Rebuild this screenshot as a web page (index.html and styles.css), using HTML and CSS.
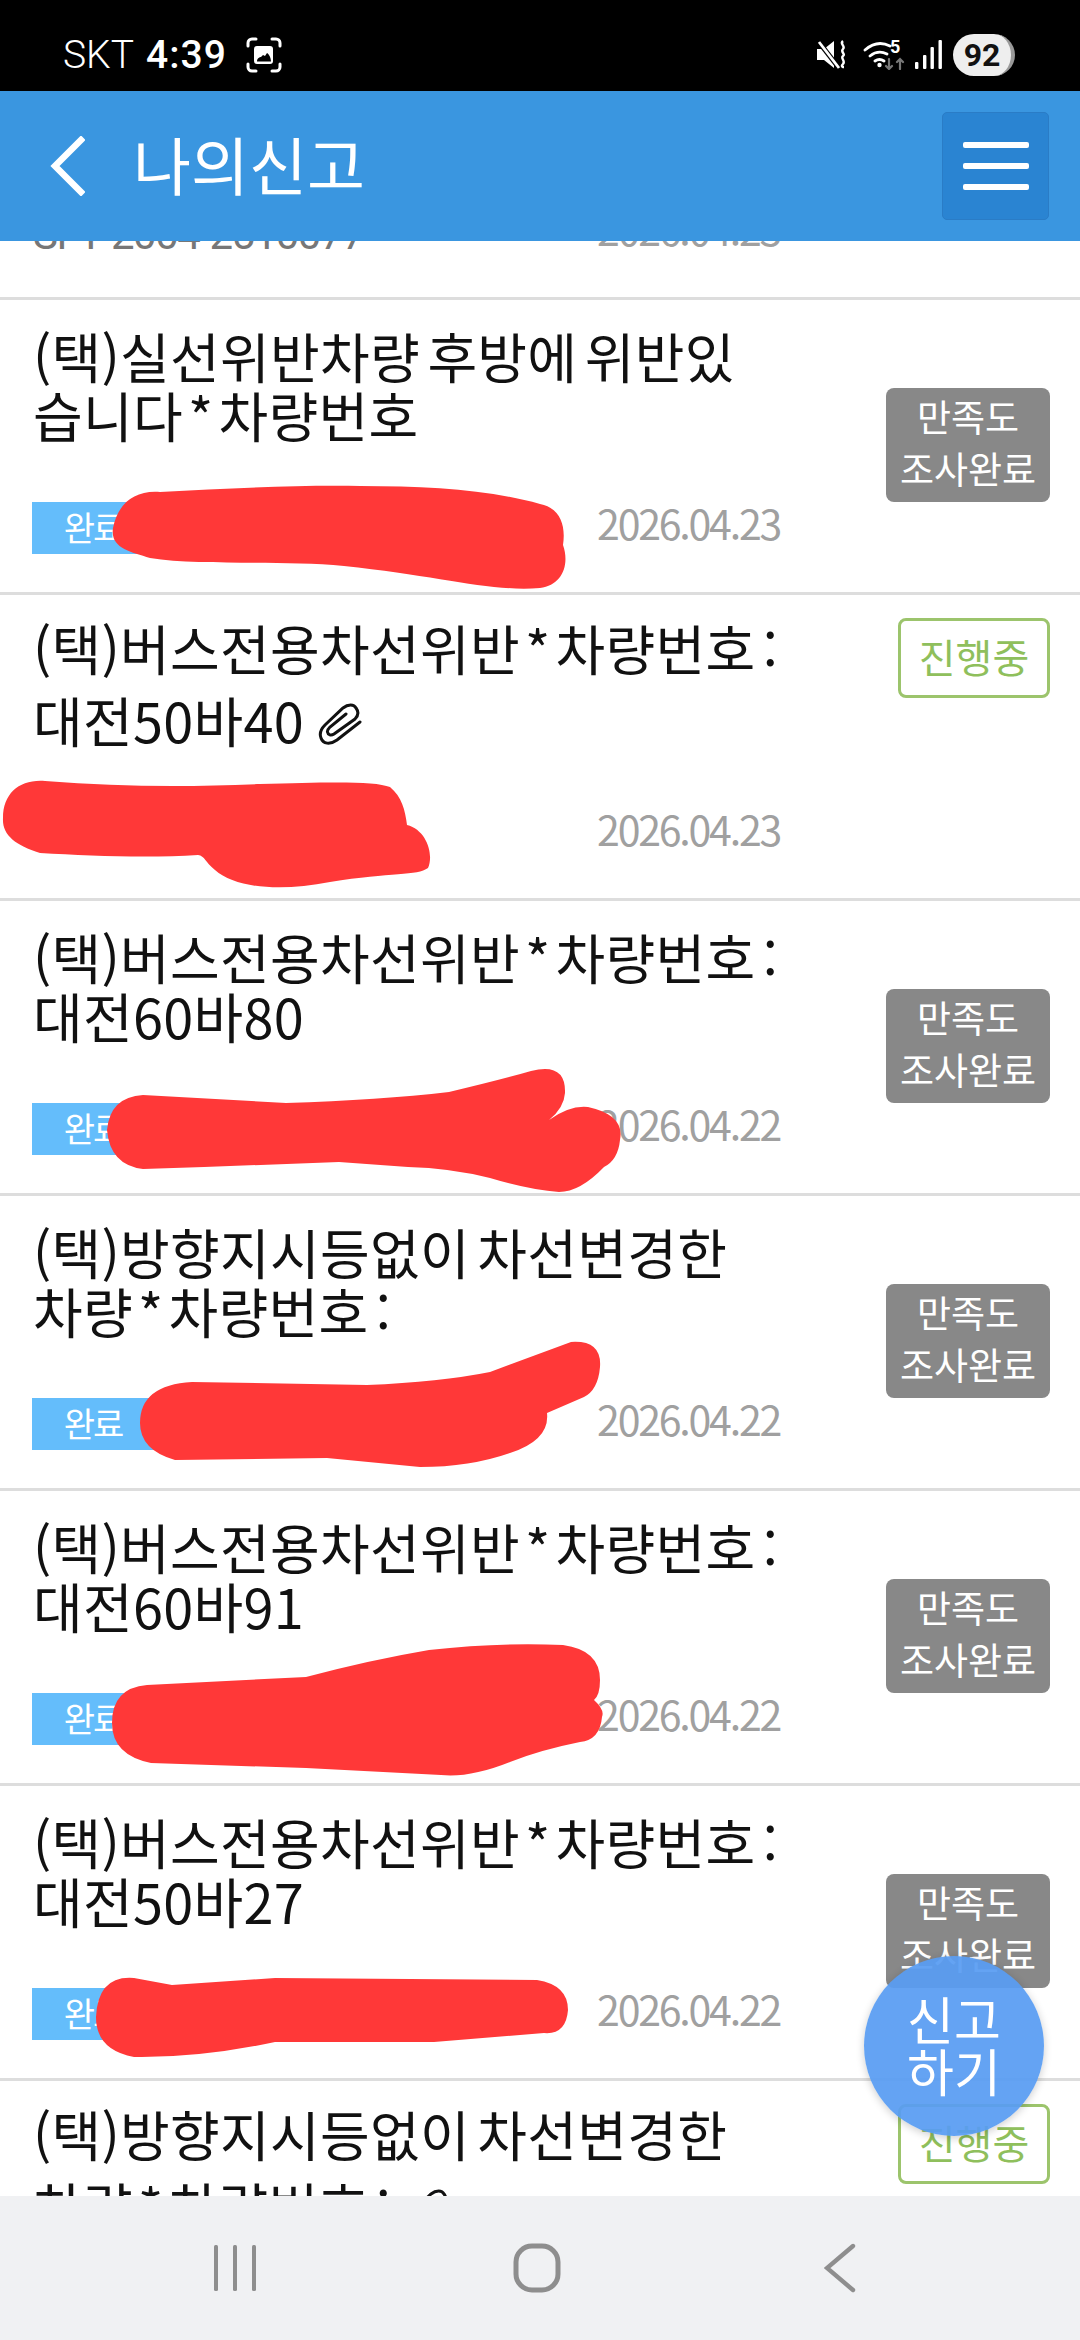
FILE: index.html
```html
<!DOCTYPE html>
<html lang="ko">
<head>
<meta charset="utf-8">
<title>나의신고</title>
<link rel="stylesheet" href="styles.css">
</head>
<body>
<div class="screen">
  <div class="status">
    <div class="status-left">
      <span class="carrier">SKT</span>
      <span class="clock">4:39</span>
      <svg class="shot" width="36" height="36" viewBox="0 0 36 36" fill="none" stroke="#fff" stroke-width="3" stroke-linecap="round"><path d="M2 9V6a4 4 0 0 1 4-4h4M26 2h4a4 4 0 0 1 4 4v3M34 27v3a4 4 0 0 1-4 4h-4M10 34H6a4 4 0 0 1-4-4v-3"/><path d="M8 12a3 3 0 0 1 3-3h13a3 3 0 0 1 3 3v12a3 3 0 0 1-3 3H11a3 3 0 0 1-3-3z" fill="#fff" stroke="none"/><path d="M11 24.500C11 21 14 20 15 20L17 18L19 19L21 16C23 17 25 21 25 24.500Z" fill="#000" stroke="none"/></svg>
    </div>
    <div class="status-right">
      <svg class="ic-mute" width="30" height="30" viewBox="0 0 30 30"><path d="M0 9h7L17 1v27L7 20H0z" fill="#fff"/><path d="M1 1l21 27" stroke="#000" stroke-width="5"/><path d="M2 2l20 26" stroke="#fff" stroke-width="2.800"/><path d="M26 1c-4 3 3 5 0 8s3 5 0 7 3 5 0 8 1 3 1 3" fill="none" stroke="#fff" stroke-width="2.400"/></svg>
      <svg class="ic-wifi" width="42" height="31" viewBox="0 0 42 31" fill="none" stroke="#fff" stroke-width="2.800" stroke-linecap="round"><path d="M2 11c8-7 17-8 25-4M7 17c5-4 11-5 17-2M12 22c3-2 6-2 9 0"/><circle cx="16.500" cy="26" r="2.200" fill="#fff" stroke="none"/><path d="M26 20v10M23 27l3 3 3-3M37 30V20M34 23l3-3 3 3" stroke="#777" stroke-width="2.200"/><text x="27" y="13.500" class="wifi-five">5</text></svg>
      <svg class="ic-signal" width="28" height="29" viewBox="0 0 28 29" fill="#fff"><rect x="1" y="22" width="3.400" height="7" rx="1"/><rect x="9" y="15" width="3.400" height="14" rx="1"/><rect x="16.500" y="7" width="3.400" height="22" rx="1"/><rect x="24.500" y="0" width="3.400" height="29" rx="1"/></svg>
      <span class="battery">92</span>
    </div>
  </div>

  <header class="appbar">
    <svg class="back" width="36" height="60" viewBox="0 0 36 60" fill="none" stroke="#fff" stroke-width="6.500" stroke-linecap="square"><path d="M32 4L6 30l26 26"/></svg>
    <h1 class="page-title">나의신고</h1>
    <button class="menu-btn" aria-label="메뉴"><span></span><span></span><span></span></button>
  </header>

  <main class="viewport">
    <div class="list">
      <article class="row row-first">
        <div class="main">
          <div class="meta"><span class="code">SFY-2004-2510077</span><span class="date">2026.04.23</span></div>
        </div>
      </article>
      <article class="row">
        <div class="main">
          <p class="title">(택)실선위반차량 후방에 위반있<br>습니다<i class="star">*</i>차량번호</p>
          <div class="meta"><span class="tag">완료</span><span class="date">2026.04.23</span></div>
        </div>
        <div class="badge done">만족도<br>조사완료</div>
      </article>
      <article class="row">
        <div class="main">
          <p class="title tall">(택)버스전용차선위반<i class="star">*</i>차량번호 :<br>대전50바40 <svg class="clip" width="44" height="43" viewBox="0 0 44 43" fill="none" stroke="#111" stroke-width="3" stroke-linecap="round"><path d="M42 19L19 37C12 42 5 41 3 35C1 30 3 26 7 22L25 5C30 1 36 1 38 5C41 9 40 13 37 16L16 31C13 33 10 32 9.500 29C9 27 10 26 12 24L28 11"/></svg></p>
          <div class="meta tall-meta"><span class="tag blank"></span><span class="date">2026.04.23</span></div>
        </div>
        <div class="badge going">진행중</div>
      </article>
      <article class="row">
        <div class="main">
          <p class="title">(택)버스전용차선위반<i class="star">*</i>차량번호 :<br>대전60바80</p>
          <div class="meta"><span class="tag">완료</span><span class="date">2026.04.22</span></div>
        </div>
        <div class="badge done">만족도<br>조사완료</div>
      </article>
      <article class="row">
        <div class="main">
          <p class="title">(택)방향지시등없이 차선변경한<br>차량<i class="star">*</i>차량번호 :</p>
          <div class="meta"><span class="tag">완료</span><span class="date">2026.04.22</span></div>
        </div>
        <div class="badge done">만족도<br>조사완료</div>
      </article>
      <article class="row">
        <div class="main">
          <p class="title">(택)버스전용차선위반<i class="star">*</i>차량번호 :<br>대전60바91</p>
          <div class="meta"><span class="tag">완료</span><span class="date">2026.04.22</span></div>
        </div>
        <div class="badge done">만족도<br>조사완료</div>
      </article>
      <article class="row">
        <div class="main">
          <p class="title">(택)버스전용차선위반<i class="star">*</i>차량번호 :<br>대전50바27</p>
          <div class="meta"><span class="tag">완료</span><span class="date">2026.04.22</span></div>
        </div>
        <div class="badge done">만족도<br>조사완료</div>
      </article>
      <article class="row">
        <div class="main">
          <p class="title tall">(택)방향지시등없이 차선변경한<br>차량<i class="star">*</i>차량번호 : <svg class="clip" width="44" height="43" viewBox="0 0 44 43" fill="none" stroke="#111" stroke-width="3" stroke-linecap="round"><path d="M42 19L19 37C12 42 5 41 3 35C1 30 3 26 7 22L25 5C30 1 36 1 38 5C41 9 40 13 37 16L16 31C13 33 10 32 9.500 29C9 27 10 26 12 24L28 11"/></svg></p>
        </div>
        <div class="badge going">진행중</div>
      </article>
    </div>
  </main>

  <nav class="navbar">
    <svg width="46" height="48" viewBox="0 0 46 48" fill="#8e8e8e"><rect x="2" y="1" width="4" height="46" rx="1.500"/><rect x="21" y="1" width="4" height="46" rx="1.500"/><rect x="40" y="1" width="4" height="46" rx="1.500"/></svg>
    <svg width="48" height="50" viewBox="0 0 48 50" fill="none" stroke="#8e8e8e" stroke-width="5"><rect x="3" y="3" width="42" height="44" rx="16"/></svg>
    <svg class="nav-back" width="32" height="50" viewBox="0 0 32 50" fill="none" stroke="#8e8e8e" stroke-width="4.400" stroke-linecap="round"><path d="M29 3L3 25l26 22"/></svg>
  </nav>

  <svg class="scribbles" width="1080" height="2340" viewBox="0 0 1080 2340" fill="#ff3838">
    <path d="M113 528C118 503 135 490 160 492C230 488 300 485 360 486C430 486 490 490 540 504C560 508 566 525 563 545C570 565 562 585 540 588C490 592 440 576 344 566C280 560 200 566 150 558C130 552 110 548 113 528Z"/>
    <path d="M3 818C3 793 20 779 45 781C120 787 190 787 260 784C330 782 375 781 390 787C402 797 405 810 407 825C427 830 434 855 428 868C417 876 392 872 330 882C280 892 235 888 215 870C205 862 205 856 198 855C150 858 90 856 40 853C15 845 2 835 3 818Z"/>
    <path d="M107 1130Q110 1097 143 1095L286 1103Q380 1100 449 1092Q500 1080 531 1071Q566 1062 565 1093Q564 1108 549 1120Q570 1105 588 1107Q625 1115 620 1140Q618 1160 604 1167Q580 1192 559 1192Q530 1190 490 1178Q450 1168 408 1167L339 1162L204 1167L143 1169Q110 1165 107 1130Z"/>
    <path d="M140 1423Q140 1385 192 1382L367 1385Q440 1382 490 1372L571 1342Q602 1340 600 1367Q598 1390 584 1397L547 1413Q550 1440 510 1453Q470 1467 420 1467L327 1458L175 1460Q140 1450 140 1423Z"/>
    <path d="M112 1723Q112 1688 147 1685L306 1677Q370 1660 429 1650Q500 1642 563 1645Q600 1650 600 1680Q600 1695 594 1700Q605 1710 602 1717Q600 1740 580 1742Q540 1750 510 1762Q470 1778 441 1775L306 1768L151 1763Q112 1755 112 1723Z"/>
    <path d="M96 2017Q98 1975 134 1978L172 1985L275 1978L537 1980Q568 1985 568 2010Q566 2035 544 2033L434 2042L275 2042Q200 2058 134 2057Q96 2050 96 2017Z"/>
  </svg>

  <button class="fab">신고<br>하기</button>
</div>
</body>
</html>
```

FILE: styles.css
```css
* { box-sizing: border-box; }
html, body { margin: 0; padding: 0; }
body { width: 1080px; height: 2340px; overflow: hidden; background: #fff; font-family: "Noto Sans CJK KR", "Noto Sans", sans-serif; }
.screen { position: relative; width: 1080px; height: 2340px; display: flex; flex-direction: column; overflow: hidden; }

.status { height: 91px; flex: none; background: #000; color: #fff; display: flex; justify-content: space-between; align-items: center; padding: 18px 65px 0 63px; }
.status-left, .status-right { display: flex; align-items: center; }
.carrier { font-family: Roboto, sans-serif; font-size: 39px; font-weight: 300; margin-right: 12px; }
.clock { font-family: Roboto, sans-serif; font-size: 39px; font-weight: 500; letter-spacing: 1px; margin-right: 19px; }
.ic-mute { margin-right: 16px; }
.ic-wifi { margin-right: 9px; }
.ic-signal { margin-right: 11px; }
.wifi-five { font-family: Roboto, sans-serif; font-size: 18px; font-weight: 700; fill: #fff; stroke: none; }
.battery { width: 62px; height: 42px; border-radius: 21px; background: #eee; color: #111; font-family: Roboto, sans-serif; font-size: 32px; font-weight: 700; display: flex; align-items: center; justify-content: center; border-right: 4px solid #999; }

.appbar { height: 150px; flex: none; background: #3a96e0; display: flex; align-items: center; padding: 0 31px 0 49px; position: relative; z-index: 2; }
.page-title { margin: 0 0 8px 48px; flex: 1; font-size: 63px; font-weight: 400; color: #fff; line-height: 1; }
.menu-btn { width: 107px; height: 108px; border: 1px solid #2a7cc6; padding: 0; border-radius: 5px; background: #2a84d2; display: flex; flex-direction: column; align-items: center; justify-content: center; gap: 15px; }
.menu-btn span { display: block; width: 66px; height: 6px; border-radius: 2px; background: #fff; }

.viewport { flex: 1; min-height: 0; overflow: hidden; }
.list { margin-top: -233px; }
.row { display: flex; height: 295px; border-bottom: 3px solid #ddd; padding: 28px 30px 0 32px; align-items: flex-start; }
.row-first { height: 292px; padding-top: 200px; }
.row:nth-child(3) { height: 306px; }
.main { flex: 1; min-width: 0; }
.title { margin: -2px 0 2px 1px; color: #111; font-size: 54px; line-height: 59px; height: 118px; letter-spacing: 0.3px; word-spacing: -8px; }
.title.tall { line-height: 72px; height: 144px; margin-top: -11px; margin-bottom: 2px; }
.star { font-style: normal; margin: 0 5px; }
.clip { vertical-align: -3px; margin-left: 7px; }
.meta { display: flex; align-items: center; margin-top: 58px; height: 52px; width: 748px; }
.tall-meta { margin-top: 52px; }
.row-first .meta { margin-top: 0; }
.code { font-family: Roboto, sans-serif; font-size: 42px; color: #777; letter-spacing: -1.5px; margin-left: 1px; }
.tag { width: 122px; height: 52px; padding-bottom: 4px; background: #64bdfb; color: #fff; font-size: 34px; letter-spacing: -2px; display: flex; align-items: center; justify-content: center; }
.tag.blank { background: transparent; }
.date { margin-left: auto; margin-bottom: 12px; font-size: 41px; color: #a0a0a0; letter-spacing: -2.2px; }
.badge { flex: none; border-radius: 8px; text-align: center; font-size: 37px; }
.badge.done { width: 164px; height: 114px; background: #888; color: #fff; line-height: 52px; padding-top: 2px; margin-top: 60px; }
.badge.going { width: 152px; height: 80px; margin-top: -5px; margin-left: 12px; background: #fff; border: 3px solid #9cc46c; color: #8fbf5c; font-size: 40px; line-height: 70px; }

.navbar { height: 144px; flex: none; background: #f0f1f3; display: flex; gap: 255px; align-items: center; padding-left: 212px; position: relative; z-index: 2; }
.nav-back { margin-left: 8px; }

.scribbles { position: absolute; left: 0; top: 0; pointer-events: none; z-index: 1; }
.fab { position: absolute; left: 864px; top: 1956px; width: 180px; height: 180px; border: 0; border-radius: 50%; padding: 0 0 4px; background: rgba(88, 156, 242, 0.93); color: #fff; font-family: inherit; font-size: 51px; line-height: 52px; box-shadow: 0 2px 8px rgba(0,0,0,.2); z-index: 3; }
```
